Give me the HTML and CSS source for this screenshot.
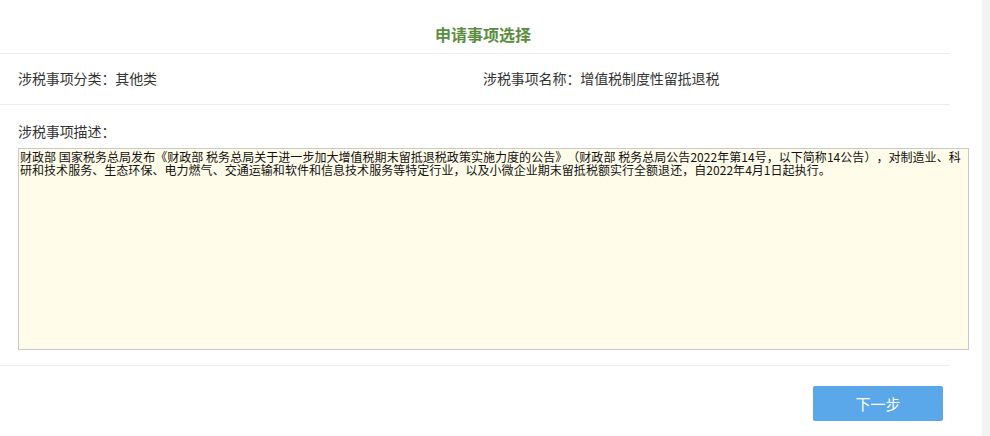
FILE: index.html
```html
<!DOCTYPE html>
<html lang="zh-CN">
<head>
<meta charset="utf-8">
<link rel="stylesheet" href="styles.css">
</head>
<body>
<div class="page">
  <main class="panel">
    <h1 class="title">申请事项选择</h1>
    <div class="row info">
      <div class="field">涉税事项分类：其他类</div>
      <div class="field">涉税事项名称：增值税制度性留抵退税</div>
    </div>
    <div class="desc">
      <div class="desc-label">涉税事项描述：</div>
      <div class="desc-box">财政部 国家税务总局发布《财政部 税务总局关于进一步加大增值税期末留抵退税政策实施力度的公告》（财政部 税务总局公告2022年第14号，以下简称14公告），对制造业、科研和技术服务、生态环保、电力燃气、交通运输和软件和信息技术服务等特定行业，以及小微企业期末留抵税额实行全额退还，自2022年4月1日起执行。</div>
    </div>
    <div class="actions">
      <button class="btn" type="button">下一步</button>
    </div>
  </main>
  <aside class="scroll"></aside>
</div>
</body>
</html>
```
FILE: styles.css
```css
* { box-sizing: border-box; }
html, body { margin: 0; padding: 0; background: #fff; }
body {
  font-family: "Noto Sans CJK SC", "Liberation Sans", sans-serif;
  color: #333;
  width: 990px;
  height: 436px;
  overflow: hidden;
  text-spacing-trim: space-all;
}
.page { display: flex; height: 436px; }
.panel { width: 982px; flex: none; }
.scroll { flex: 1; background: #f3f3f3; }
.title {
  margin: 0;
  width: 950px;
  height: 54px;
  padding-top: 22px;
  text-align: center;
  font-size: 16px;
  line-height: 24px;
  font-weight: bold;
  color: #5b8d3f;
  border-bottom: 1px solid #ececec;
  padding-left: 16px;
}
.row.info {
  display: flex;
  width: 950px;
  height: 51px;
  border-bottom: 1px solid #ececec;
  align-items: center;
  padding-left: 18px;
  padding-bottom: 2px;
}
.field { font-size: 14px; color: #333; line-height: 16px; letter-spacing: -0.1px; }
.field:first-child { width: 465px; }
.desc { padding: 18px 0 0 18px; }
.desc-label { font-size: 14px; line-height: 16px; color: #333; height: 25px; letter-spacing: -0.1px; }
.desc-box {
  width: 951px;
  height: 202px;
  background: #fffcea;
  border: 1px solid #c9c9c9;
  padding: 1px 0 0 1px;
  font-size: 12px;
  line-height: 13px;
  color: #111;
  letter-spacing: 0.04px;
}
.actions {
  width: 950px;
  margin-top: 15px;
  border-top: 1px solid #efefef;
  padding: 20px 7px 0 0;
  display: flex;
  justify-content: flex-end;
}
.btn {
  width: 130px;
  height: 35px;
  border: none;
  border-radius: 2px;
  background: #5aa7ea;
  color: #fff;
  font-family: "Noto Sans CJK SC", sans-serif;
  font-size: 15px;
}
```
